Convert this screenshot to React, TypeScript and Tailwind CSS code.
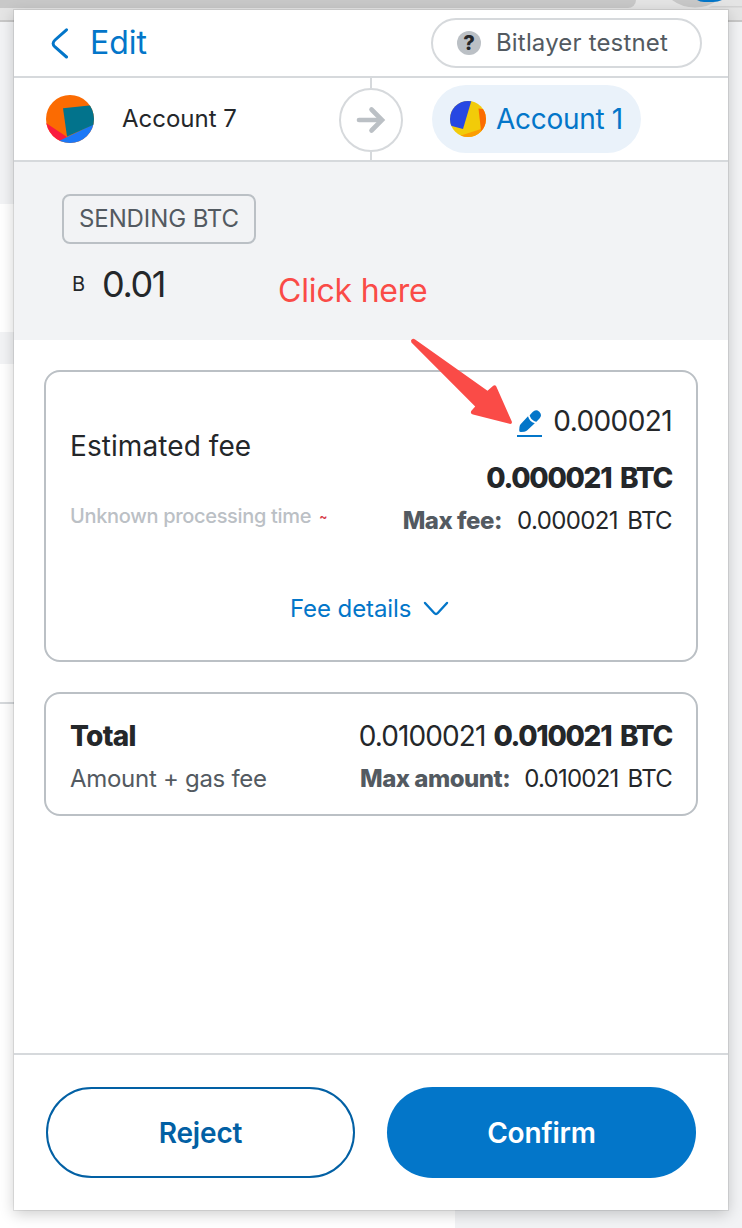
function BackIcon() {
  return (
    <svg className="block h-8 w-5" viewBox="0 0 20 32" fill="none">
      <path d="M16.5 2.8 L5 13 Q1.2 16.5 5 20 L16.5 30" stroke="#0376c9" strokeWidth="3" strokeLinecap="round" />
    </svg>
  );
}

function PencilIcon() {
  return (
    <svg className="block h-[23px] w-6" viewBox="0 0 24 23">
      <path
        d="M10 6.3 C10.8 9.6 13.3 12.4 16.8 13.2 L9 20.6 Q7.8 21.7 6.2 21.8 L3 22.1 Q1.1 22.1 1.2 20.2 L1.5 17 Q1.7 15.2 2.8 14 Z"
        fill="#0376c9"
      />
      <path
        d="M11.7 5.2 L14.6 2 Q18 -1.2 21.3 1.8 Q24.6 5.2 21.5 8.5 L18.4 11.7 C15.2 11.2 12.3 8.5 11.7 5.2 Z"
        fill="#0376c9"
      />
    </svg>
  );
}

function AvatarFrom() {
  return (
    <svg className="block size-12" viewBox="0 0 48 48">
      <clipPath id="from">
        <circle cx="24" cy="24" r="24" />
      </clipPath>
      <g clipPath="url(#from)">
        <rect width="48" height="48" fill="#fb6b02" />
        <path d="M0 28 L21 42 L12 48 H0 Z" fill="#fa1c3e" />
        <path d="M12 46.5 L48 29 V48 H12 Z" fill="#1b78f7" />
        <path d="M17 13.3 L48 10 V29.5 L21 41.5 Z" fill="#02738c" />
      </g>
    </svg>
  );
}

function AvatarTo() {
  return (
    <svg className="block size-9" viewBox="0 0 36 36">
      <clipPath id="to">
        <circle cx="18" cy="18" r="18" />
      </clipPath>
      <g clipPath="url(#to)">
        <rect width="36" height="36" fill="#f2cb09" />
        <path d="M0 0 H21.3 L13 28 L0 24.5 Z" fill="#2647e3" />
        <path d="M11 34.5 L31 28 L36 36 H11 Z" fill="#fb9d02" />
        <path d="M28.5 7.5 L36 8.5 V30 L31 29.5 Z" fill="#fb6b02" />
      </g>
    </svg>
  );
}

function Backdrop() {
  return (
    <div className="flex h-[1228px] flex-col bg-[#f2f3f5]">
      <div className="flex h-[22px] justify-between overflow-hidden border-b-2 border-[#c8c8c8] bg-[#e4e4e4]">
        <div className="h-2 w-[636px] rounded-br-[22px] bg-[#c8c8c8]" />
        <svg className="block h-2 w-[72px]" viewBox="0 0 72 8">
          <path d="M2 0 H48 Q38 7.5 25 7.5 Q12 7.5 2 0 Z" fill="#c8c8c8" />
          <path d="M27 0 H52 Q48 1.9 43 1.9 H34 Q30 1.9 27 0 Z" fill="#0376c9" />
          <path d="M42 6 H72 V7.5 H38 Z" fill="#d2d2d2" />
        </svg>
      </div>
      <div className="h-[182px]" />
      <div className="h-32 w-[455px] bg-white" />
      <div className="h-8 w-[455px] bg-[#f2f3f5]" />
      <div className="w-[455px] flex-1 bg-white">
        <div className="h-[340px] border-b-2 border-[#d6d9dc]" />
      </div>
    </div>
  );
}

function Header() {
  return (
    <div className="flex h-[68px] items-center justify-between border-b-2 border-[#d6d9dc] pr-[26px] pl-[36px]">
      <div className="flex items-center text-[#0376c9]">
        <BackIcon />
        <span className="ml-[20px] text-[32px] leading-8">Edit</span>
      </div>
      <div className="flex h-[50px] w-[271px] items-center rounded-full border-2 border-[#d6d9dc] pl-6">
        <span className="flex size-6 items-center justify-center rounded-full bg-[#bbc0c5] text-[20px] leading-6 font-extrabold text-[#24272a]">
          ?
        </span>
        <span className="ml-[15px] text-[24px] leading-6 tracking-[0.17px] whitespace-nowrap text-[#535a61]">
          Bitlayer testnet
        </span>
      </div>
    </div>
  );
}

function Accounts() {
  return (
    <div className="flex h-[84px] items-stretch border-b-2 border-[#d6d9dc]">
      <div className="flex w-[325px] items-center pl-8">
        <AvatarFrom />
        <span className="ml-[28px] text-[24px] leading-6 text-[#24272a]">Account 7</span>
      </div>
      <div className="flex w-16 flex-col items-center">
        <div className="h-2.5 w-0.5 bg-[#d6d9dc]" />
        <div className="flex size-16 items-center justify-center rounded-full border-2 border-[#d6d9dc]">
          <svg className="block h-7 w-[30px]" viewBox="0 0 30 28" fill="none" stroke="#bbc0c5" strokeWidth="4.6">
            <path d="M3 14 H25" strokeLinecap="round" />
            <path d="M15.5 3.5 L26 14 L15.5 24.5" strokeLinecap="round" />
          </svg>
        </div>
        <div className="w-0.5 flex-1 bg-[#d6d9dc]" />
      </div>
      <div className="mt-[7px] ml-[29px] flex h-[68px] w-[209px] items-center self-start rounded-full bg-[#eaf2fa] pl-[18px]">
        <AvatarTo />
        <span className="ml-[10px] text-[28px] leading-7 tracking-[-0.3px] whitespace-nowrap text-[#0376c9]">
          Account 1
        </span>
      </div>
    </div>
  );
}

function Sending() {
  return (
    <div className="flex h-[178px] flex-col items-start bg-[#f2f3f5] pt-8 pl-12">
      <div className="flex h-[50px] w-[194px] items-center justify-center rounded-lg border-2 border-[#bbc0c5] text-[24px] leading-6 tracking-[-0.1px] whitespace-nowrap text-[#535a61]">
        SENDING BTC
      </div>
      <div className="mt-[22px] flex items-center text-[#24272a]">
        <span className="ml-[10px] text-[20px] leading-9">B</span>
        <span className="ml-[17px] text-[36px] leading-9 tracking-[-1.4px]">0.01</span>
        <span className="relative top-[7px] ml-[113px] text-[32px] leading-8 tracking-[-0.2px] whitespace-nowrap text-[#fa4b47]">
          Click here
        </span>
      </div>
    </div>
  );
}

function FeeCard() {
  return (
    <div className="h-[292px] rounded-2xl border-2 border-[#bbc0c5] pr-6 pl-6">
      <div className="flex justify-between">
        <div className="flex flex-col">
          <span className="mt-[60px] text-[28px] leading-7 tracking-[0.08px] whitespace-nowrap text-[#24272a]">
            Estimated fee
          </span>
          <span className="mt-[44px] text-[20px] leading-6 font-medium tracking-[-0.32px] whitespace-nowrap text-[#bbc0c5]">
            Unknown processing time{" "}
            <span className="relative -top-0.5 ml-[3px] text-[12px] font-bold text-[#d73847]">~</span>
          </span>
        </div>
        <div className="flex flex-col items-end text-[#24272a]">
          <div className="mt-[35px] flex items-start">
            <span className="mt-[3px] mr-[11px] flex h-[27px] w-[25px] flex-col items-center justify-start border-b-2 border-[#0376c9]">
              <PencilIcon />
            </span>
            <span className="text-[28px] leading-7 tracking-[-0.6px]">0.000021</span>
          </div>
          <span className="mt-[27px] text-[28px] leading-7 font-extrabold tracking-[-1.3px] [word-spacing:4px] whitespace-nowrap">
            0.000021 BTC
          </span>
          <div className="mt-[17px] flex text-[24px] leading-6 whitespace-nowrap">
            <span className="font-extrabold tracking-[-0.45px] text-[#535a61]">Max fee:</span>
            <span className="ml-[15px] tracking-[-0.6px] [word-spacing:3px]">0.000021 BTC</span>
          </div>
        </div>
      </div>
      <div className="mt-[63px] flex items-center pl-[220px] text-[#0376c9]">
        <span className="text-[24px] leading-[26px] tracking-[-0.1px] whitespace-nowrap">Fee details</span>
        <svg className="ml-[12px] block h-4 w-[26px]" viewBox="0 0 26 16" fill="none">
          <path d="M2 2 L11.2 12 Q13 13.8 14.8 12 L24 2" stroke="#0376c9" strokeWidth="2.4" strokeLinecap="round" />
        </svg>
      </div>
    </div>
  );
}

function TotalCard() {
  return (
    <div className="mt-[30px] flex h-[124px] justify-between rounded-2xl border-2 border-[#bbc0c5] px-6 whitespace-nowrap text-[#24272a]">
      <div className="flex flex-col">
        <span className="mt-[28px] text-[28px] leading-7 font-extrabold tracking-[-0.7px]">Total</span>
        <span className="mt-[17px] text-[24px] leading-6 tracking-[-0.29px] text-[#535a61]">Amount + gas fee</span>
      </div>
      <div className="flex flex-col items-end">
        <div className="mt-[28px] flex text-[28px] leading-7">
          <span className="tracking-[-0.9px]">0.0100021</span>
          <span className="ml-[8px] font-extrabold tracking-[-1.3px] [word-spacing:4px]">0.010021 BTC</span>
        </div>
        <div className="mt-[17px] flex text-[24px] leading-6">
          <span className="font-extrabold tracking-[-0.5px] text-[#535a61]">Max amount:</span>
          <span className="ml-[14px] tracking-[-0.75px] [word-spacing:3px]">0.010021 BTC</span>
        </div>
      </div>
    </div>
  );
}

function Footer() {
  return (
    <div className="flex h-[157px] gap-8 border-t-2 border-[#d6d9dc] px-8 pt-8 text-[28px] leading-7 font-semibold tracking-[-0.15px]">
      <button className="h-[91px] w-[309px] rounded-full border-2 border-[#0260a4] text-[#0260a4]">Reject</button>
      <button className="h-[91px] w-[309px] rounded-full bg-[#0376c9] text-white">Confirm</button>
    </div>
  );
}

export default function App() {
  return (
    <div className="relative h-[1228px] w-[742px] overflow-hidden font-['Inter',sans-serif]">
      <Backdrop />
      <div className="absolute top-[10px] left-[14px] flex h-[1200px] w-[714px] flex-col bg-white shadow-[0_0_0_1px_rgba(0,0,0,0.08),0_4px_14px_rgba(0,0,0,0.2)]">
        <Header />
        <Accounts />
        <Sending />
        <div className="flex-1 px-[30px] pt-[30px]">
          <FeeCard />
          <TotalCard />
        </div>
        <Footer />
      </div>
      <svg className="absolute top-[336px] left-[408px] h-[92px] w-[106px]" viewBox="0 0 106 92">
        <path
          d="M3 4.5 Q4.5 1.5 7.5 3.8 L79.5 54.7 L85.2 49.8 Q87 48.2 88.3 50.5 L103.8 85.5 Q104.5 88.3 101.5 87.8 L65 78.6 Q62 77.7 63.2 75 L67.2 70.5 L3.4 6.5 Z"
          fill="#fa4b47"
        />
      </svg>
    </div>
  );
}
